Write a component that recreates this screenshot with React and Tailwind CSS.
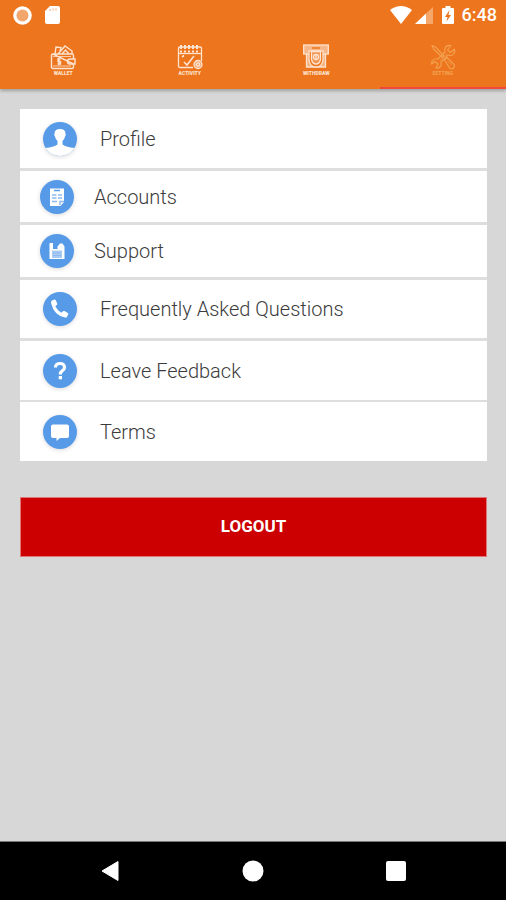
const tabs = [
  { label: "WALLET", Icon: WalletIcon },
  { label: "ACTIVITY", Icon: ActivityIcon },
  { label: "WITHDRAW", Icon: WithdrawIcon },
  { label: "SETTING", Icon: ToolsIcon, active: true },
];

const items = [
  { label: "Profile", Icon: ProfileIcon, row: "h-[62px] border-b-[3px] pl-[22px] gap-[22px]" },
  { label: "Accounts", Icon: AccountsIcon, row: "h-[54px] border-b-[3px] pl-[19px] gap-[19px]" },
  { label: "Support", Icon: SupportIcon, row: "h-[55px] border-b-[3px] pl-[19px] gap-[19px]" },
  { label: "Frequently Asked Questions", Icon: PhoneIcon, row: "h-[61px] border-b-[3px] pl-[22px] gap-[22px]" },
  { label: "Leave Feedback", Icon: QuestionIcon, row: "h-[61px] border-b-2 pl-[22px] gap-[22px]" },
  { label: "Terms", Icon: ChatIcon, row: "h-[59px] pl-[22px] gap-[22px]" },
];

function WalletIcon() {
  return (
    <svg viewBox="0 0 26 26" className="h-[26px] w-[26px]" fill="none" stroke="currentColor" strokeWidth="1.4">
      <path d="M5 10L6 3l5 .5L10 7" />
      <path d="M8 10l7-8 7 5v3M12 10l3.500-4L19 10" />
      <path d="M3 10h19q1.500 0 1.500 1.500V15M23.500 20v3q0 1.500-1.500 1.500H3Q1.500 24.500 1.500 23V11.500Q1.500 10 3 10z" />
      <path d="M3 12.500h18M3 22h18" strokeWidth=".8" />
      <path d="M25 15h-5q-2.500 0-2.500 2.500T20 20h5z" />
      <path d="M10.500 15H8v2.500h2.500V20H7.500M9 13.800v7.400" />
    </svg>
  );
}

function ActivityIcon() {
  return (
    <svg viewBox="0 0 26 26" className="h-[26px] w-[26px]" fill="none" stroke="currentColor" strokeWidth="1.300">
      <path d="M16 23.500H3Q1.500 23.500 1.500 22V4Q1.500 3 3 3h20q1.500 0 1.500 1v13" />
      <path d="M2 9.500h22" />
      <path d="M4 1v4M8 1v4M12 1v4M16 1v4M20 1v4" strokeWidth="2" />
      <path d="M3 7.500h20" strokeDasharray="2 2" strokeWidth="2" />
      <path d="M7 18l3 3 7-9M5 13l2-1.500" strokeWidth="1.600" />
      <circle cx="21" cy="20.500" r="4" fill="currentColor" fillOpacity=".5" />
      <circle cx="21" cy="20.500" r="1.700" />
    </svg>
  );
}

function WithdrawIcon() {
  return (
    <svg viewBox="0 0 26 26" className="h-[26px] w-[26px]" fill="none" stroke="currentColor" strokeWidth="1.300">
      <rect x=".7" y="1" width="24.600" height="9" fill="currentColor" fillOpacity=".6" />
      <path d="M3.500 10v13h19V10" fill="currentColor" fillOpacity=".55" />
      <path d="M6 7h14v9q-1 7-7 7t-7-7z" fill="#ed751d" />
      <path d="M8.500 7.500h9v8q-1 4.500-4.500 4.500t-4.500-4.500z" fill="currentColor" fillOpacity=".3" />
      <path d="M9 4h8" stroke="#ed751d" strokeWidth="1.500" />
      <circle cx="13" cy="13" r="2.500" />
      <path d="M13 11v4" />
    </svg>
  );
}

function ToolsIcon() {
  return (
    <svg viewBox="0 0 26 26" className="h-[26px] w-[26px]" fill="none" stroke="currentColor" strokeWidth="1.200" strokeLinejoin="round">
      <path d="M2 1.500l3.500 1.500L14 12l-1.500 1.500L3.500 5z" />
      <path d="M14.500 16l2.500-2.500 7 7q1 2-.5 3.500t-3.500.5z" />
      <path d="M24.500 5l-4 3.500L17.500 6 21 1.500q-5-.5-6 3-.5 2 0 3.500L8 15q-4-1-6 2l-.5 3L5 17.500 8 20l-2 4q4 .5 5-2.500.5-2 0-3.500l7-7q4 1.500 6-1.500 1-2 .5-4.500z" />
      <path d="M10 16.500l7-7M17.500 17l4 4" strokeWidth=".8" />
    </svg>
  );
}

function Disc({ children }) {
  return (
    <svg viewBox="0 0 36 36" className="h-9 w-9 shrink-0 drop-shadow-sm" aria-hidden="true">
      <circle cx="18" cy="18" r="17" fill="#569ae8" />
      {children}
    </svg>
  );
}

function ProfileIcon() {
  return (
    <Disc>
      <path d="M3.500 27q8-1 12-3.500V20q-2-1.500-2.500-4.500-1.200-1-.5-3 0-4.500 5.500-4.500t5.500 4.500q.7 2-.5 3-.5 3-2.500 4.500v3.500q4 2.500 12 3.500Q27 35 18 35T3.500 27z" fill="#fff" />
    </Disc>
  );
}

function AccountsIcon() {
  return (
    <Disc>
      <path d="M11 9.500h14v13.500l-3.500 4H11z" fill="#fff" />
      <path d="M15 11.500h6" stroke="#569ae8" strokeWidth="1.500" />
      <path d="M13 16h4.500M19 16h4M13 19h4.500M19 19h4M13 22.500h5M21 26v-3.500h4" fill="none" stroke="#8db9ee" strokeWidth="1.500" />
    </Disc>
  );
}

function SupportIcon() {
  return (
    <Disc>
      <path d="M10.500 10H14v6h4.500v-2.500l2.500-3h2.500l2 3V26h-15z" fill="#fff" />
      <rect x="13" y="17.500" width="10" height="7.500" fill="#a9ccf5" />
      <path d="M14 20h8M14 22.500h8" stroke="#8db9ee" />
    </Disc>
  );
}

function PhoneIcon() {
  return (
    <Disc>
      <path d="M10 9.500l2.500-1q1 0 1.300.7l1.400 3.300q.3 1-.5 1.600l-1.400 1.200q2 4.200 6 6.500l1.700-1.500q.7-.6 1.500-.2l3.300 1.800q.8.500.5 1.400l-1.300 2.500q-.6 1-1.800.8Q12 24.500 9 12q-.3-1.800 1-2.500z" fill="#fff" />
    </Disc>
  );
}

function QuestionIcon() {
  return (
    <Disc>
      <path d="M13.500 14.500Q13.500 10.500 18 10.500t4.500 4q0 2-2.300 3.300Q18.300 19 18.300 21.500" fill="none" stroke="#fff" strokeWidth="3.200" />
      <rect x="16.700" y="23" width="3.300" height="3.300" fill="#fff" />
    </Disc>
  );
}

function ChatIcon() {
  return (
    <Disc>
      <path d="M11 10.500h14q2 0 2 2V22q0 2-2 2h-7l-3.500 3v-3H11q-2 0-2-2v-9.500q0-2 2-2z" fill="#fff" />
    </Disc>
  );
}

function StatusBar() {
  return (
    <div className="flex h-[30px] items-center justify-between pl-3 pr-[9px] text-white">
      <div className="flex items-center gap-3">
        <svg viewBox="0 0 20 20" className="h-5 w-5" aria-hidden="true">
          <circle cx="10.500" cy="10.500" r="9.300" fill="#fff" />
          <circle cx="10.500" cy="10.500" r="6" fill="#f3a66c" />
        </svg>
        <svg viewBox="0 0 16 20" className="h-5 w-4" aria-hidden="true">
          <path d="M6 1h8q2 0 2 2v14q0 2-2 2H3q-2 0-2-2V6z" fill="#fff" />
          <path d="M6 4v2M9 3.500v2M12 3.500v2" stroke="#f3a66c" />
        </svg>
      </div>
      <div className="flex items-center">
        <svg viewBox="0 0 22 18" className="h-[18px] w-[22px]" aria-hidden="true">
          <path d="M0 4Q11-4 22 4L11 18z" fill="#fff" />
        </svg>
        <svg viewBox="0 0 18 17" className="ml-[3px] h-[17px] w-[18px]" aria-hidden="true">
          <path d="M0 17L18 0v17z" fill="#f5a76c" />
          <path d="M0 17L11 6.500V17z" fill="#fff" />
        </svg>
        <svg viewBox="0 0 12 18" className="ml-[9px] h-[18px] w-3" aria-hidden="true">
          <path d="M3.500 0h5v2H11q1 0 1 1v14q0 1-1 1H1q-1 0-1-1V3q0-1 1-1h2.500z" fill="#fff" />
          <path d="M7.500 4L3 11h2.500L4.500 15.500 9 9H6.500z" fill="#ed751d" />
        </svg>
        <span className="ml-2 text-lg leading-5 font-medium">6:48</span>
      </div>
    </div>
  );
}

export default function App() {
  return (
    <div className="flex min-h-screen flex-col bg-[#d7d7d7] font-['Roboto',sans-serif]">
      <header className="bg-[#ed751d] shadow-[0_2px_3px_rgba(0,0,0,0.25)]">
        <StatusBar />
        <nav className="grid h-[59px] grid-cols-4">
          {tabs.map(({ label, Icon, active }) => (
            <button
              key={label}
              type="button"
              className={`flex flex-col items-center border-b-2 pt-[14px] ${
                active ? "border-[#f0493a] text-[#f3a150]" : "border-transparent text-[#fde3d0]"
              }`}
            >
              <Icon />
              <span className="text-[5px] leading-[6px] font-black">{label}</span>
            </button>
          ))}
        </nav>
      </header>

      <main className="flex-1 pt-5 pr-[19px] pl-5">
        <ul className="bg-white">
          {items.map(({ label, Icon, row }) => (
            <li key={label}>
              <button
                type="button"
                className={`flex w-full items-center border-[#dedede] text-left text-xl font-light text-[#3c3c3c] ${row}`}
              >
                <Icon />
                <span>{label}</span>
              </button>
            </li>
          ))}
        </ul>

        <button
          type="button"
          className="mt-9 h-[60px] w-full border border-[#df7777] bg-[#cc0000] text-[17px] font-bold text-white"
        >
          LOGOUT
        </button>
      </main>

      <footer className="flex h-[59px] items-center justify-center gap-[122px] border-t border-[#777] bg-black">
        <button type="button" aria-label="Back">
          <svg viewBox="0 0 20 22" className="h-[22px] w-5">
            <path d="M2 11L18 1.500v19z" fill="#fff" stroke="#fff" strokeLinejoin="round" />
          </svg>
        </button>
        <button type="button" aria-label="Home">
          <svg viewBox="0 0 22 22" className="h-[22px] w-[22px]">
            <circle cx="11" cy="11" r="10.500" fill="#fff" />
          </svg>
        </button>
        <button type="button" aria-label="Recent apps">
          <svg viewBox="0 0 20 20" className="h-5 w-5">
            <rect width="20" height="20" rx="2" fill="#fff" />
          </svg>
        </button>
      </footer>
    </div>
  );
}
